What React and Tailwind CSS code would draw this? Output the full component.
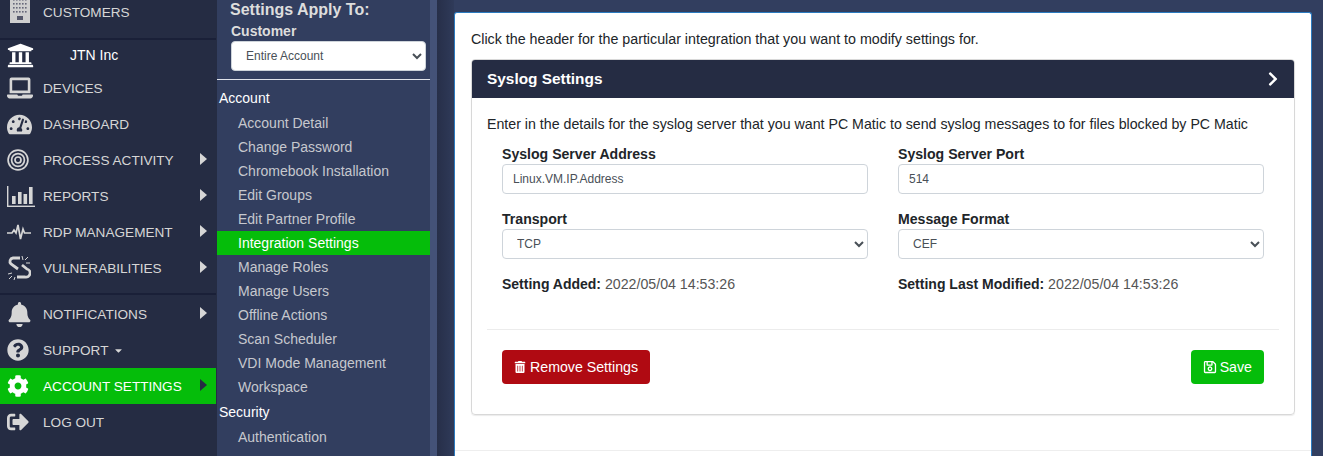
import {
  FaUniversity,
  FaLaptop,
  FaTachometerAlt,
  FaBell,
  FaQuestionCircle,
  FaCog,
  FaSignOutAlt,
  FaTrashAlt,
  FaRegSave,
  FaChevronRight,
  FaCaretDown,
} from 'react-icons/fa';

// small hand drawn icons that the packages don't have in this shape
const BuildingIcon = () => (
  <svg viewBox="0 0 20 30" className="w-[20px] h-[30px]">
    <rect width="20" height="30" fill="#cfcfcf" />
    {[2, 6, 10, 14, 18].map((y) =>
      [4, 7, 10, 13, 16].map((x) => <rect key={`${x}-${y}`} x={x - 1} y={y} width="1.6" height="1.6" fill="#66687a" />)
    )}
    <rect x="7" y="23" width="6" height="4" fill="#55586b" />
  </svg>
);

const TargetIcon = () => (
  <svg viewBox="0 0 22 22" className="w-[22px] h-[22px]" fill="none" stroke="currentColor">
    <circle cx="11" cy="11" r="9.9" strokeWidth="1.7" />
    <circle cx="11" cy="11" r="6.4" strokeWidth="1.7" />
    <circle cx="11" cy="11" r="3" strokeWidth="1.7" />
  </svg>
);

const BarsIcon = () => (
  <svg viewBox="0 0 28 21" className="w-[28px] h-[21px]" fill="currentColor">
    <rect x="0" y="0" width="1.4" height="21" />
    <rect x="0" y="19.6" width="28" height="1.4" />
    <rect x="5" y="10" width="3.6" height="8" />
    <rect x="11" y="6" width="3.6" height="12" />
    <rect x="16.5" y="8" width="3.6" height="10" />
    <rect x="22" y="1" width="3.6" height="17" />
  </svg>
);

const PulseIcon = () => (
  <svg viewBox="0 0 24 18" className="w-[24px] h-[18px]" fill="none" stroke="currentColor" strokeWidth="1.7">
    <path d="M0 10h5l2-3 2 3 2-8 2.5 14 2.5-10 1.5 4H24" />
  </svg>
);

const BrokenLinkIcon = () => (
  <svg viewBox="0 0 24 24" className="w-[24px] h-[24px]" fill="none" stroke="currentColor">
    <path d="M13 2H6a3.5 3.5 0 0 0-2 6l7 5" strokeWidth="2.8" />
    <path d="M15 9l5 4a4 4 0 0 1-2 8H10" strokeWidth="2.8" />
    <path d="M15 0l1 4M21 1l-3 3M23 7h-4M1 18l4-1M2 23l3-3M7 24l1-3" strokeWidth="1" />
  </svg>
);

const Arrow = ({ dark }) => (
  <span
    className={`absolute left-[200px] top-[11px] w-0 h-0 border-y-[6px] border-y-transparent border-l-[7px] ${
      dark ? 'border-l-[#252c43]' : 'border-l-[#d6d6d6]'
    }`}
  />
);

const navTop = [
  { label: 'DEVICES', icon: <FaLaptop size={26} /> },
  { label: 'DASHBOARD', icon: <FaTachometerAlt size={25} /> },
  { label: 'PROCESS ACTIVITY', icon: <TargetIcon />, arrow: true },
  { label: 'REPORTS', icon: <BarsIcon />, arrow: true },
  { label: 'RDP MANAGEMENT', icon: <PulseIcon />, arrow: true },
  { label: 'VULNERABILITIES', icon: <BrokenLinkIcon />, arrow: true },
];

const accountLinks = [
  'Account Detail',
  'Change Password',
  'Chromebook Installation',
  'Edit Groups',
  'Edit Partner Profile',
  'Integration Settings',
  'Manage Roles',
  'Manage Users',
  'Offline Actions',
  'Scan Scheduler',
  'VDI Mode Management',
  'Workspace',
];

function NavRow({ label, icon, arrow, active, caret }) {
  return (
    <div
      className={`relative flex items-center h-[36px] w-[216px] text-[13.6px] ${
        active ? 'bg-[#05bd0a] text-white' : 'text-[#d6d6d6]'
      }`}
    >
      <span className="flex w-[43px] pl-[7px] shrink-0">{icon}</span>
      <span className="pt-[2px]">{label}</span>
      {caret && <FaCaretDown size={11} className="ml-[5px]" />}
      {arrow && <Arrow dark={active} />}
    </div>
  );
}

function Field({ label, children }) {
  return (
    <div>
      <label className="block h-[20px] leading-[20px] text-[14.1px] font-bold text-[#212529]">{label}</label>
      {children}
    </div>
  );
}

const controlClass =
  'block w-full h-[30px] rounded-[4px] border border-[#ced4da] bg-white text-[12px] text-[#495057]';

export default function App() {
  return (
    <div className="flex h-[456px] overflow-hidden bg-[#323e5f] font-['Liberation_Sans',Arial,sans-serif]">
      {/* main nav */}
      <aside className="w-[217px] shrink-0 bg-[#252c43]">
        <div className="flex items-center h-[24px] w-[216px] text-[13.6px] text-[#d6d6d6]">
          <span className="flex w-[43px] pl-[10px] -mt-[8px] shrink-0">
            <BuildingIcon />
          </span>
          <span className="pt-[2px]">CUSTOMERS</span>
        </div>
        <div className="w-[216px] h-[2px] mt-[14px] bg-[#1a2038]" />
        <div className="flex items-center h-[30px] w-[216px] text-[14px] text-white">
          <span className="flex w-[36px] pl-[7px] shrink-0">
            <FaUniversity size={27} />
          </span>
          <span className="ml-[34px]">JTN Inc</span>
        </div>
        {navTop.map((item) => (
          <NavRow key={item.label} {...item} />
        ))}
        <div className="w-[216px] h-[2px] mt-[7px] mb-[1px] bg-[#1a2038]" />
        <NavRow label="NOTIFICATIONS" icon={<FaBell size={25} />} arrow />
        <NavRow label="SUPPORT" icon={<FaQuestionCircle size={22} />} caret />
        <NavRow label="ACCOUNT SETTINGS" icon={<FaCog size={22} />} arrow active />
        <NavRow label="LOG OUT" icon={<FaSignOutAlt size={22} />} />
      </aside>

      {/* settings nav */}
      <aside className="w-[213px] shrink-0">
        <div className="h-[18px] pl-[13px] text-[16px] leading-[20px] font-bold text-[#dddddd]">
          Settings Apply To:
        </div>
        <div className="h-[23px] pl-[14px] pt-[4px] text-[14px] leading-[18px] font-bold text-[#dddddd]">
          Customer
        </div>
        <div className="pl-[14px] pr-[4px]">
          <select className="block w-full h-[30px] rounded-[4px] border border-[#ced4da] bg-white pl-[10px] text-[12px] text-[#495057]">
            <option>Entire Account</option>
          </select>
        </div>
        <div className="h-px mt-[8px] bg-[#dfe2ea]" />
        <div className="h-[24px] mt-[6px] pl-[2px] text-[14px] leading-[24px] text-white">Account</div>
        <div className="h-[1px]" />
        {accountLinks.map((link) => (
          <div
            key={link}
            className={`h-[24px] pl-[21px] text-[14px] leading-[24px] ${
              link === 'Integration Settings' ? 'bg-[#05bd0a] text-white' : 'text-[#c6c8ce]'
            }`}
          >
            {link}
          </div>
        ))}
        <div className="h-[26px] pl-[2px] text-[14px] leading-[26px] text-white">Security</div>
        <div className="h-[24px] pl-[21px] text-[14px] leading-[24px] text-[#c6c8ce]">Authentication</div>
      </aside>

      <div className="w-[7px] shrink-0 bg-[#445278]" />
      <div className="w-[17px] shrink-0 bg-gradient-to-r from-[#272f49] to-[#2f3a59]" />

      {/* content */}
      <main className="w-[858px] shrink-0 mt-[12px]">
        <div className="h-[460px] rounded-t-[3px] border border-[#2b7bc0] border-b-0 bg-white px-[16px] pt-[16px]">
          <p className="h-[20px] text-[14.25px] leading-[20px] text-[#212529]">
            Click the header for the particular integration that you want to modify settings for.
          </p>
          <section className="mt-[10px] w-[824px] rounded-[4px] border border-[#d8d8d8] shadow-[0_1px_1px_rgba(0,0,0,0.08)]">
            <header className="flex items-center justify-between h-[38px] rounded-t-[3px] bg-[#252c43] pl-[15px] pr-[13px]">
              <h2 className="text-[15.4px] font-bold text-white">Syslog Settings</h2>
              <FaChevronRight size={16} className="text-white" />
            </header>
            <div className="h-[316px] px-[15px] pt-[16px]">
              <p className="h-[20px] text-[14.2px] leading-[20px] text-[#212529]">
                Enter in the details for the syslog server that you want PC Matic to send syslog messages to for files
                blocked by PC Matic
              </p>
              <div className="grid grid-cols-[366px_366px] gap-x-[30px] gap-y-[15px] ml-[15px] mt-[10px]">
                <Field label="Syslog Server Address">
                  <input className={`${controlClass} px-[10px]`} defaultValue="Linux.VM.IP.Address" />
                </Field>
                <Field label="Syslog Server Port">
                  <input className={`${controlClass} px-[10px]`} defaultValue="514" />
                </Field>
                <Field label="Transport">
                  <select className={`${controlClass} pl-[10px]`}>
                    <option>TCP</option>
                  </select>
                </Field>
                <Field label="Message Format">
                  <select className={`${controlClass} pl-[10px]`}>
                    <option>CEF</option>
                  </select>
                </Field>
                <p className="text-[14px] leading-[20px] text-[#555]">
                  <b className="text-[#212529]">Setting Added:</b> <span className="text-[14.2px]">2022/05/04 14:53:26</span>
                </p>
                <p className="text-[14px] leading-[20px] text-[#555]">
                  <b className="text-[#212529]">Setting Last Modified:</b> <span className="text-[14.2px]">2022/05/04 14:53:26</span>
                </p>
              </div>
              <div className="h-px mt-[35px] bg-[#ececec]" />
              <div className="flex justify-between ml-[15px] mr-[15px] mt-[20px]">
                <button className="flex items-center gap-[4px] h-[34px] px-[12px] rounded-[4px] bg-[#b00a12] text-[14.2px] text-white">
                  <FaTrashAlt size={12} />
                  <span className="pt-[2px]">Remove Settings</span>
                </button>
                <button className="flex items-center gap-[3px] h-[34px] px-[12px] rounded-[4px] bg-[#05bd0a] text-[14.2px] text-white">
                  <FaRegSave size={14} />
                  <span className="pt-[2px]">Save</span>
                </button>
              </div>
            </div>
          </section>
          <div className="h-px mt-[35px] -mx-[16px] bg-[#eeeeee]" />
        </div>
      </main>
    </div>
  );
}
